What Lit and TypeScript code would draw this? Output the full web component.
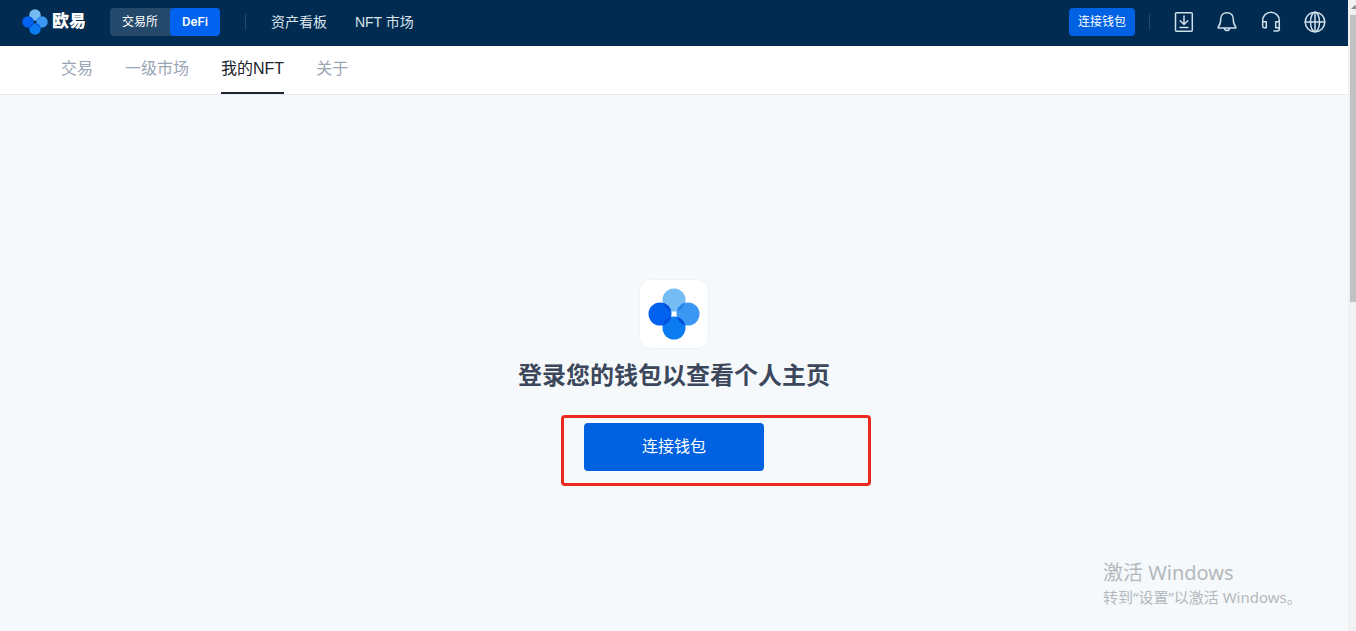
import { LitElement, html, css, svg } from "lit";
import { customElement, property } from "lit/decorators.js";

@customElement("petal-mark")
class PetalMark extends LitElement {
  static styles = css`
    :host { display: block; }
    .mark { display: block; width: 100%; height: 100%; }
    .overlap { fill: #0050dc; }
    .overlap-light { fill: #2585e8; }
  `;

  render() {
    return html`
      <svg class="mark" viewBox="0 0 52 52" aria-hidden="true">
        <defs>
          <clipPath id="left"><circle cx="12" cy="26" r="11.5" /></clipPath>
          <clipPath id="right"><circle cx="40" cy="26" r="11.5" /></clipPath>
        </defs>
        <circle cx="26" cy="12" r="11.5" fill="#75bcf4" />
        <circle cx="40" cy="26" r="11.5" fill="#3b97f2" />
        <circle cx="26" cy="40" r="11.5" fill="#0a7bf0" />
        <circle cx="12" cy="26" r="11.5" fill="#0062ee" />
        <g clip-path="url(#left)">
          <circle class="overlap" cx="26" cy="12" r="11.5" />
          <circle class="overlap" cx="26" cy="40" r="11.5" />
        </g>
        <g clip-path="url(#right)">
          <circle class="overlap-light" cx="26" cy="12" r="11.5" />
          <circle class="overlap" cx="26" cy="40" r="11.5" />
        </g>
      </svg>
    `;
  }
}

const icons = {
  download: svg`<rect x="3.5" y="1.7" width="16.8" height="18.6" rx="1" /><path d="M12 5v8.4M8.2 9.8l3.8 3.7 3.8-3.7M8 16.5h8" />`,
  bell: svg`<path d="M11 1.7c-4 0-6.3 2.8-6.3 6.5 0 3.6-.6 5.6-2.4 7.6-.4.6-.2 1.2.5 1.2h16.4c.7 0 .9-.6.5-1.2-1.8-2-2.4-4-2.4-7.6 0-3.7-2.3-6.5-6.3-6.5zM8 17.3c.6 1.6 1.7 2.2 3 2.2s2.4-.6 3-2.2" />`,
  headset: svg`<path d="M2.7 14.5V9.3a8.3 8 0 0 1 16.6 0v9c0 1.2-.6 1.7-1.8 1.7H14M2.7 10.7h3.600v6H4.200c-1 0-1.500-.5-1.500-1.500zM19.300 10.700h-3.600v6h3.600" />`,
  globe: svg`<circle cx="11" cy="11" r="9.8" /><ellipse cx="11" cy="11" rx="4.5" ry="9.8" /><path d="M1.2 11h19.6M11 1.2v19.6" />`,
};

@customElement("icon-button")
class IconButton extends LitElement {
  @property() icon: keyof typeof icons = "globe";
  @property() name = "";

  static styles = css`
    :host { display: block; }
    .button {
      display: block;
      padding: 0;
      border: 0;
      background: none;
      color: #cfdfec;
      cursor: pointer;
    }
    .glyph {
      display: block;
      width: 22px;
      height: 22px;
      fill: none;
      stroke: currentColor;
      stroke-width: 1.5;
      stroke-linecap: round;
      stroke-linejoin: round;
    }
  `;

  render() {
    return html`
      <button class="button" type="button" aria-label=${this.name}>
        <svg class="glyph" viewBox="0 0 22 22" aria-hidden="true">${icons[this.icon]}</svg>
      </button>
    `;
  }
}

@customElement("app-root")
class AppRoot extends LitElement {
  static styles = css`
    :host {
      display: flex;
      height: 100vh;
      overflow: hidden;
      font-family: "Liberation Sans", "Noto Sans CJK SC", sans-serif;
      font-size: 14px;
    }
    * { box-sizing: border-box; }
    a { color: inherit; text-decoration: none; }
    button { font-family: inherit; cursor: pointer; }
    .page {
      flex: 1;
      min-width: 0;
      display: flex;
      flex-direction: column;
      background: #f5f9fc;
    }
    .header {
      display: flex;
      align-items: center;
      height: 46px;
      padding: 0 22px 2px;
      background: #012b50;
      color: #d9e4ee;
    }
    .brand {
      display: flex;
      align-items: center;
      gap: 4px;
      margin-right: 24px;
      font-size: 17px;
      line-height: 26px;
      font-weight: 900;
      color: #fff;
    }
    .brand-mark { width: 26px; height: 26px; }
    .switch {
      display: flex;
      height: 28px;
      border-radius: 4px;
      background: #24496b;
    }
    .option {
      padding: 0 12px;
      border: 0;
      border-radius: 4px;
      background: none;
      color: #fff;
      font-size: 12px;
      line-height: 28px;
    }
    .option-on {
      background: #0062ee;
      font-family: Roboto, sans-serif;
      font-size: 13px;
      font-weight: 500;
    }
    .rule { width: 1px; height: 16px; background: #27496a; }
    .switch + .rule { margin: 0 25px; }
    .links { display: flex; gap: 28px; line-height: 20px; }
    .tools { display: flex; align-items: center; margin-left: auto; }
    .connect {
      height: 28px;
      padding: 0 9px;
      border: 0;
      border-radius: 4px;
      background: #0062e3;
      color: #fff;
      font-size: 12px;
      line-height: 28px;
    }
    .tools .rule { margin: 0 22px 0 14px; }
    .icons { display: flex; gap: 22px; }
    .tabs {
      display: flex;
      gap: 32px;
      height: 49px;
      padding: 0 61px;
      border-bottom: 1px solid #e6ebf0;
      background: #fff;
      color: #9aa5b5;
      font-size: 16px;
      line-height: 46px;
    }
    .tab { height: 48px; }
    .tab-on { border-bottom: 2px solid #20242e; color: #20242e; }
    .main {
      flex: 1;
      display: flex;
      flex-direction: column;
      align-items: center;
      justify-content: center;
      padding-top: 24px;
    }
    .tile {
      display: grid;
      place-items: center;
      width: 70px;
      height: 70px;
      border: 1px solid #eff3f7;
      border-radius: 12px;
      background: #fff;
    }
    .tile-mark { width: 52px; height: 52px; }
    .title {
      margin: 8px 0 28px;
      color: #3c475b;
      font-size: 24px;
      line-height: 38px;
      font-weight: 700;
    }
    .action { position: relative; }
    .login {
      display: block;
      width: 180px;
      height: 48px;
      padding: 0;
      border: 0;
      border-radius: 4px;
      background: #0062e0;
      color: #fff;
      font-size: 16px;
      line-height: 48px;
    }
    .highlight {
      position: absolute;
      inset: -8px -107px -15px -23px;
      border: 3px solid #ea2a1f;
      border-radius: 4px;
      pointer-events: none;
    }
    .notice {
      position: absolute;
      right: 48px;
      bottom: 22px;
      width: 205px;
      color: #b4b8bb;
      font-family: "Noto Sans", "Noto Sans CJK SC", sans-serif;
      font-size: 15px;
      line-height: 24px;
      white-space: nowrap;
      pointer-events: none;
    }
    .notice-title { font-size: 20px; }
    .notice p { margin: 0; }
    .scroll {
      display: flex;
      flex-direction: column;
      width: 8px;
      padding: 4px 0 0 2px;
      background: #f1f1f1;
    }
    .arrow { display: block; width: 6px; height: 6px; margin-bottom: 5px; fill: #8a8a8a; }
    .thumb { height: 287px; background: #c1c1c1; }
  `;

  render() {
    return html`
      <div class="page">
        <header class="header">
          <a class="brand" href="#"><petal-mark class="brand-mark"></petal-mark>欧易</a>
          <div class="switch">
            <button class="option" type="button">交易所</button>
            <button class="option option-on" type="button">DeFi</button>
          </div>
          <span class="rule"></span>
          <nav class="links">
            <a href="#">资产看板</a>
            <a href="#">NFT 市场</a>
          </nav>
          <div class="tools">
            <button class="connect" type="button">连接钱包</button>
            <span class="rule"></span>
            <div class="icons">
              <icon-button icon="download" name="下载"></icon-button>
              <icon-button icon="bell" name="通知"></icon-button>
              <icon-button icon="headset" name="客服"></icon-button>
              <icon-button icon="globe" name="语言"></icon-button>
            </div>
          </div>
        </header>
        <nav class="tabs">
          <a class="tab" href="#">交易</a>
          <a class="tab" href="#">一级市场</a>
          <a class="tab tab-on" href="#" aria-current="page">我的NFT</a>
          <a class="tab" href="#">关于</a>
        </nav>
        <main class="main">
          <div class="tile"><petal-mark class="tile-mark"></petal-mark></div>
          <h1 class="title">登录您的钱包以查看个人主页</h1>
          <div class="action">
            <button class="login" type="button">连接钱包</button>
            <div class="highlight"></div>
          </div>
        </main>
      </div>
      <div class="scroll" aria-hidden="true">
        <svg class="arrow" viewBox="0 0 6 6"><path d="M1 5L5 1L6 2V5Z" /></svg>
        <div class="thumb"></div>
      </div>
      <aside class="notice">
        <p class="notice-title">激活 Windows</p>
        <p>转到“设置”以激活 Windows。</p>
      </aside>
    `;
  }
}
